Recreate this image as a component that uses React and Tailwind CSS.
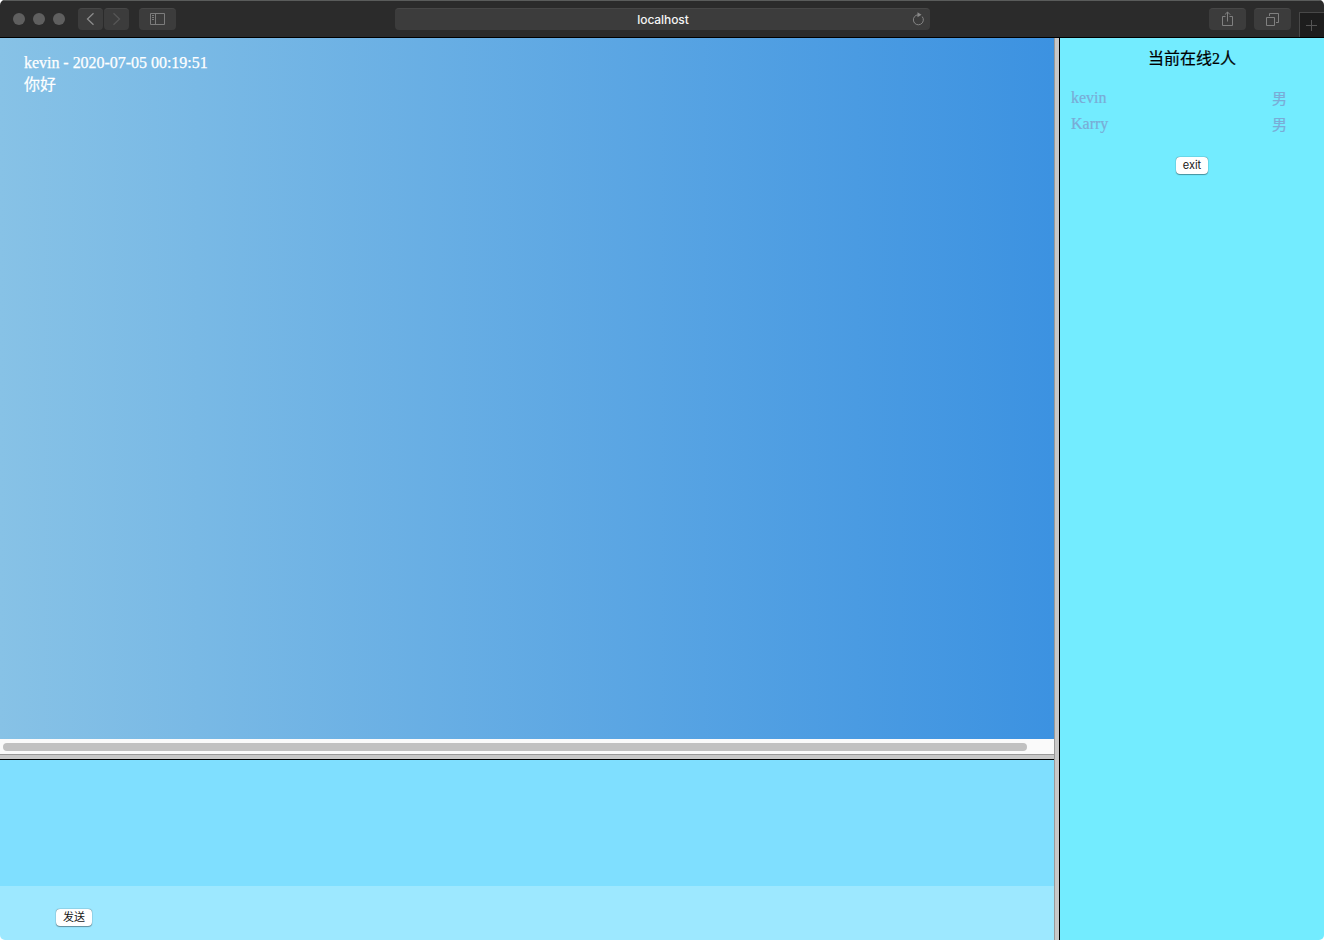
const cjk = "font-['Liberation_Serif','Noto_Sans_CJK_SC',serif]";

function ToolButton({ className, children }) {
  return (
    <div className={`flex h-[22px] items-center justify-center rounded-[4px] border-t border-[#474747] bg-[#3c3c3c] ${className}`}>
      {children}
    </div>
  );
}

function Toolbar() {
  return (
    <header className="flex h-[38px] shrink-0 items-start border-t border-b border-t-[#5a5c5b] border-b-black bg-[#2b2b2b] pt-[7px]">
      <div className="flex h-[22px] w-[78px] shrink-0 items-center gap-2 pl-[13px]">
        <span className="size-3 rounded-full bg-[#5f5f5f]" />
        <span className="size-3 rounded-full bg-[#5f5f5f]" />
        <span className="size-3 rounded-full bg-[#5f5f5f]" />
      </div>
      <div className="flex w-[317px] shrink-0">
        <ToolButton className="w-[25px]">
          <svg className="-mt-px" width="9" height="14" viewBox="0 0 9 14" fill="none" stroke="#8c8c8c" strokeWidth="1.3"><path d="M7.5 1.3 1.5 7l6 5.7" /></svg>
        </ToolButton>
        <ToolButton className="ml-px w-[25px]">
          <svg className="-mt-px" width="9" height="14" viewBox="0 0 9 14" fill="none" stroke="#565656" strokeWidth="1.3"><path d="m1.5 1.3 6 5.7-6 5.7" /></svg>
        </ToolButton>
        <ToolButton className="ml-[10px] w-[37px]">
          <svg className="-mt-px" width="15" height="12" viewBox="0 0 15 12" fill="none" stroke="#7c7c7c"><path d="M.5.5h14v11H.5zM5.5.5v11M2 2.5h2M2 4.5h2M2 6.5h2" /></svg>
        </ToolButton>
      </div>
      <div className="flex h-[22px] w-[535px] shrink-0 items-center rounded-[4px] border-t border-[#474747] bg-[#3c3c3c] pr-[5px] pl-[19px]">
        <span className="flex-1 text-center font-['Inter','Liberation_Sans',sans-serif] text-[12px] leading-[22px] font-medium tracking-[-0.1px] text-[#f4f4f4]">localhost</span>
        <svg className="-mt-0.5" width="13" height="14" viewBox="0 0 13 14" fill="none" stroke="#848484">
          <path d="M10.2 4.6A5 5 0 1 1 6.3 2.8" />
          <path d="m5.5.3 4 2.5-4 2.4z" fill="#898989" stroke="none" />
        </svg>
      </div>
      <div className="ml-auto flex">
        <ToolButton className="w-[37px]">
          <svg className="-mt-px" width="13" height="16" viewBox="0 0 13 16" fill="none" stroke="#808080"><path d="M4.5 5.5h-3v9h10v-9h-3M6.5 10.5V1M3.8 3.7 6.5 1l2.7 2.7" /></svg>
        </ToolButton>
        <ToolButton className="ml-2 w-[37px]">
          <svg className="-mt-px" width="13" height="13" viewBox="0 0 13 13" fill="none" stroke="#808080"><path d="M.5 4.5h8v8h-8zM3.5 3V.5h9v9H10" /></svg>
        </ToolButton>
        <div className="mt-1 ml-2 flex h-[25px] w-[25px] items-center justify-center border-t border-l border-[#484848] bg-[#1d1d1d]">
          <svg width="12" height="12" viewBox="0 0 12 12" stroke="#555555"><path d="M5.5 1v11M0 6.5h11" /></svg>
        </div>
      </div>
    </header>
  );
}

function SmallButton({ className, children }) {
  return (
    <button className={`flex h-[17px] items-center justify-center rounded-[4px] bg-white font-['Inter','Noto_Sans_CJK_SC',sans-serif] text-[11px] leading-none text-[#161616] shadow-[0_0_1px_rgba(0,0,0,0.5),0_0.5px_1px_rgba(0,0,0,0.35)] ${className}`}>
      {children}
    </button>
  );
}

const users = [
  { name: "kevin", sex: "男" },
  { name: "Karry", sex: "男" },
];

export default function App() {
  return (
    <div className="h-[940px] w-[1324px] bg-white">
      <div className="flex h-full flex-col overflow-hidden rounded-[5px]">
        <Toolbar />
        <div className="flex min-h-0 flex-1">
          <main className="flex w-[1054px] shrink-0 flex-col">
            <section className={`h-[701px] bg-[linear-gradient(90deg,#87c2e6_0%,#3c92e1_100%)] pt-[14px] pl-6 text-[16px] text-white ${cjk}`}>
              <p className="leading-[21px] tracking-[-0.03px] [-webkit-text-stroke:0.25px_white]">kevin - 2020-07-05 00:19:51</p>
              <p className="leading-[23px] [-webkit-text-stroke:0.2px_white]">你好</p>
            </section>
            <div className="flex h-[15px] items-center bg-[#fafafa] pl-[3px]">
              <div className="h-2 w-[1024px] rounded-full bg-[#c1c1c1]" />
            </div>
            <div className="h-[6px] border-t border-b border-t-[#999999] border-b-black bg-[#c8c8c8]" />
            <section className="h-[126px] bg-[#7fdfff]" />
            <section className="flex-1 bg-[#9de8ff] pt-[23px] pl-14">
              <SmallButton className="w-9">发送</SmallButton>
            </section>
          </main>
          <div className="w-[6px] shrink-0 border-r border-l border-r-black border-l-[#999999] bg-[#c8c8c8]" />
          <aside className={`flex flex-1 flex-col items-center bg-[#73ecff] pt-2 text-[16px] ${cjk}`}>
            <h1 className="leading-[25px] text-black [-webkit-text-stroke:0.2px_black]">当前在线2人</h1>
            <ul className="mt-[15px] w-full pr-[37px] pl-[11px] text-[#7aabd6] [-webkit-text-stroke:0.2px_#7aabd6]">
              {users.map((user) => (
                <li key={user.name} className="flex h-[26px] justify-between leading-[26px]">
                  <span className="-mt-px">{user.name}</span>
                  <span className="text-[15px]">{user.sex}</span>
                </li>
              ))}
            </ul>
            <SmallButton className="mt-[19px] w-8">exit</SmallButton>
          </aside>
        </div>
      </div>
    </div>
  );
}
